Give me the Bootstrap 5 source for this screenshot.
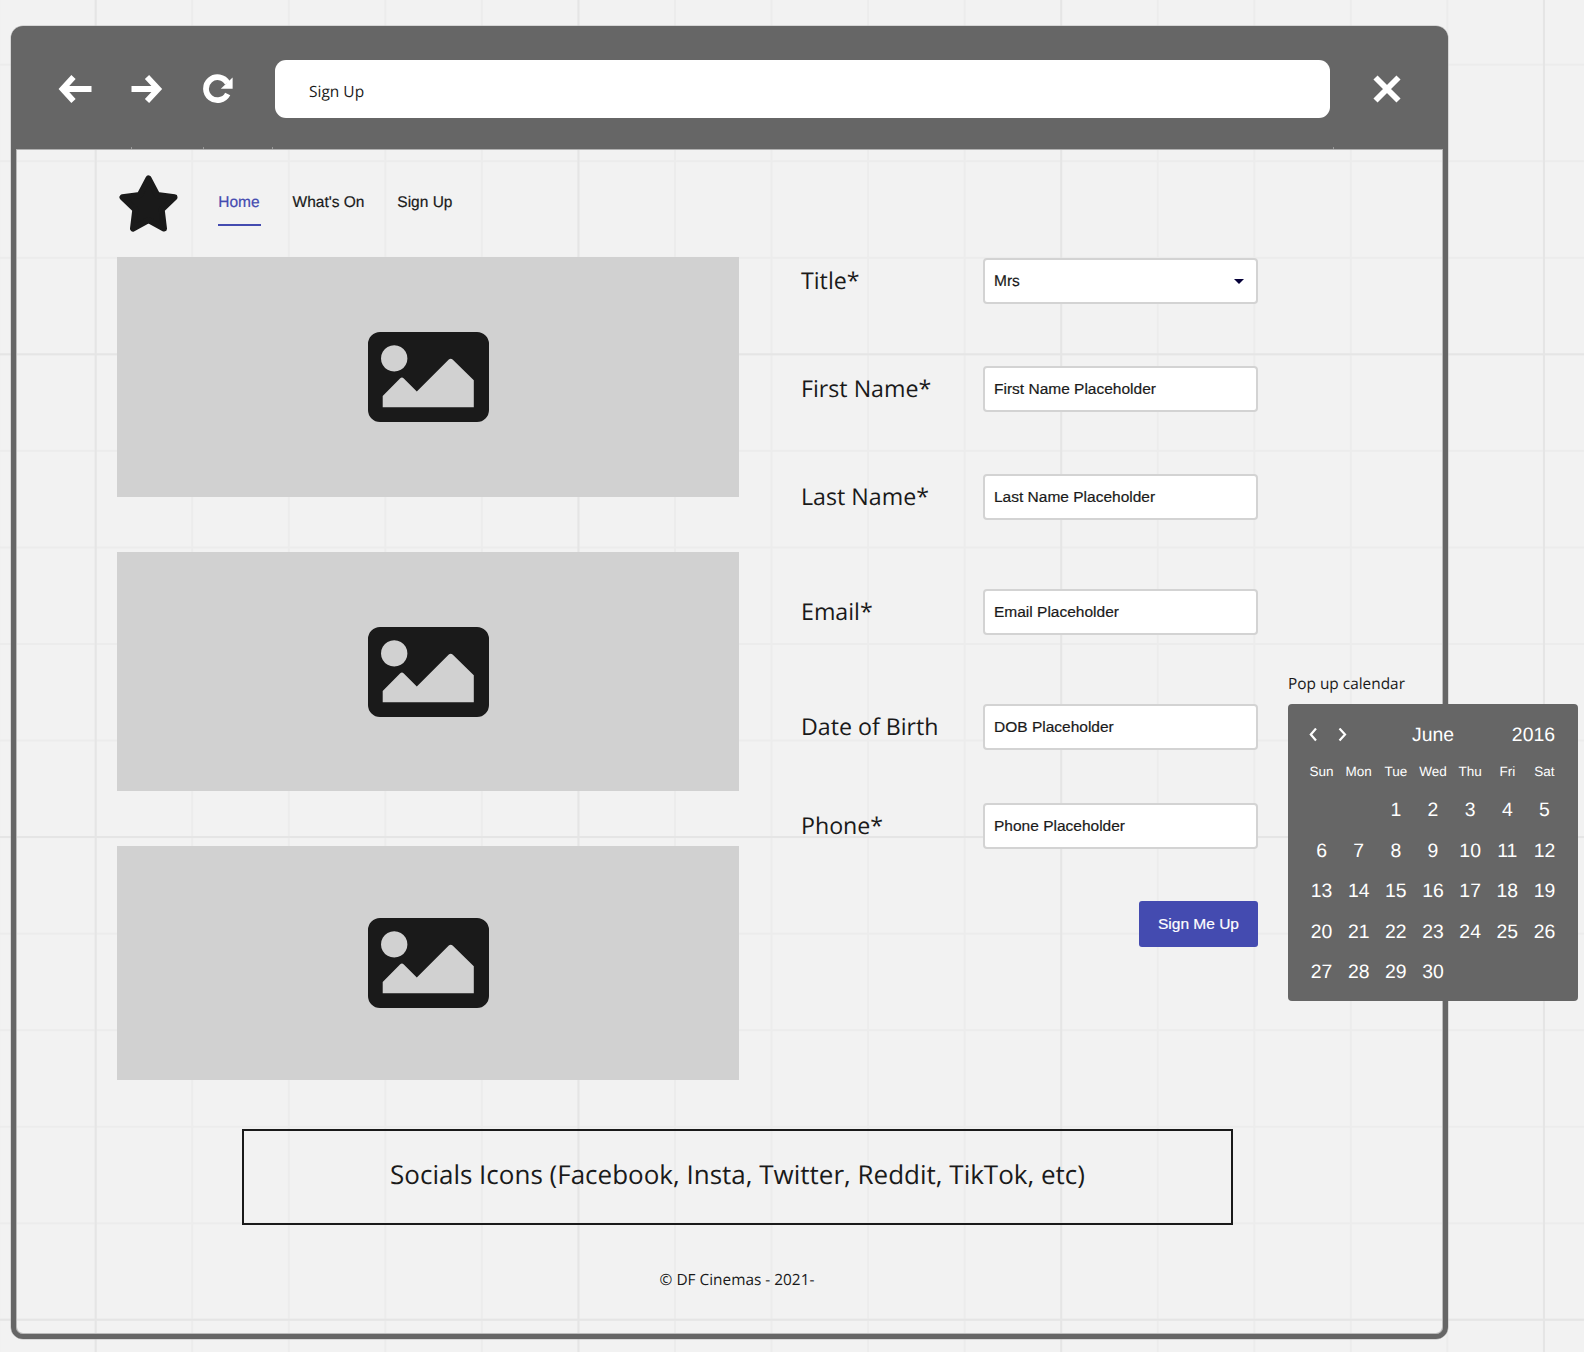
<!DOCTYPE html>
<html lang="en">
<head>
<meta charset="utf-8">
<meta name="viewport" content="width=device-width, initial-scale=1">
<title>Sign Up</title>
<link href="https://cdn.jsdelivr.net/npm/bootstrap@5.3.0/dist/css/bootstrap.min.css" rel="stylesheet">
<style>
body{background:#f2f2f2;color:#1a1a1a;font-family:"Open Sans","Noto Sans",sans-serif;margin:0;text-rendering:geometricPrecision}
.board{width:1584px;height:1352px;padding:26px 0 0 11px}
.board-grid{position:absolute;left:0;top:0;z-index:0}
.browser{width:1437px;height:1313px;border:5px solid #666;border-radius:12px;box-shadow:0 0 0 .5px #bbb,inset 0 0 0 1px #bbb;z-index:1}
.bar{height:118px;background:linear-gradient(#999,#999) 115px 100%/1px 2px no-repeat,linear-gradient(#999,#999) 187px 100%/1px 2px no-repeat,linear-gradient(#999,#999) 256px 100%/1px 2px no-repeat,linear-gradient(#999,#999) 1317px 100%/1px 2px no-repeat,#666;padding:0 42px 2px 42px;box-shadow:0 1px 0 #b0b0b0}
.bar svg{display:block;flex:none}
.url{width:1055px;height:58px;border-radius:11px;padding:5px 0 0 34px;font-size:15.5px;margin:0 auto 0 0}
.arial{font-family:"Liberation Sans",Arial,sans-serif}
.site-nav{height:108px;padding-left:103px;font-size:15.5px;-webkit-text-stroke:.2px}
.site-nav .nav-link{color:#1a1a1a;padding:0 1.6px 0 .3px;height:46px;line-height:46px;border-bottom:2px solid transparent}
.site-nav .nav-link.active{color:#444bb0;border-color:#444bb0}
.main{padding-left:101px;height:846px}
.pics{width:622px}
.pic{background:#d1d1d1}
.signup{width:457px;margin-left:62px;padding-top:1px}
.field-label{width:182px;font-size:23.2px;line-height:45px;height:46px;white-space:nowrap}
.signup .form-control{width:275px;height:46px;border:2px solid #d3d3d3;border-radius:4px;padding:0 9px;font-size:15.5px;color:#1a1a1a;background:#fff;line-height:42px;-webkit-text-stroke:.2px}
.signup .picker{padding-top:1px}
.caret{width:0;height:0;border:5px solid transparent;border-top-color:#050038;border-bottom:0;margin-right:3px}
.send{width:119px;height:46px;background:#444bb0;color:#fff;border:0;border-radius:3px;font-size:15.5px;padding:0;-webkit-text-stroke:.2px}
.gap-a{margin-bottom:62px}.gap-b{margin-bottom:69px}.gap-c{margin-bottom:53px}
.socials{width:991px;height:96px;border:2px solid #1a1a1a;margin:26px 0 0 226px;font-size:26px;padding-bottom:5px}
.copy{font-size:15.4px;margin-top:43px;width:990px;margin-left:226px}
.popup{left:1288px;top:672px;z-index:2}
.popup-title{font-size:15.4px;height:32px;line-height:23px}
.cal{width:290px;height:297px;background:#666;border-radius:4px;padding:11px 15px;color:#fff}
.cal-head{height:40px;font-size:19.4px;padding:0 8px 0 6px}
.cal-head span{padding-top:1px}
.cal-grid{display:grid;grid-template-columns:repeat(7,37.15px);text-align:center;font-size:19.4px;line-height:40.5px}
.cal-days{font-size:13.5px;line-height:34px;margin-bottom:1px}
</style>
</head>
<body>
<div class="board position-relative overflow-hidden">
<svg class="board-grid" width="1584" height="1352" fill="none">
<defs>
<pattern id="minor" x="94.7" y="63.7" width="96.55" height="96.55" patternUnits="userSpaceOnUse"><path d="M1 0V97M0 1H97" stroke="#ececec" stroke-width="2"/></pattern>
<pattern id="major" x="94.7" y="353.3" width="482.75" height="482.7" patternUnits="userSpaceOnUse"><path d="M1 0V483M0 1H483" stroke="#e5e5e5" stroke-width="2"/></pattern>
</defs>
<rect width="1584" height="1352" fill="url(#minor)"/><rect width="1584" height="1352" fill="url(#major)"/>
</svg>

<div class="browser position-relative d-flex flex-column">
<header class="bar d-flex align-items-center">
<svg width="34" height="28" viewBox="0 0 34 28" fill="none" stroke="#fff" stroke-width="5.8"><path d="M15.5 2 4.5 14l11 12M5 14h28.5"/></svg>
<svg style="margin-left:39px" width="32" height="28" viewBox="0 0 32 28" fill="none" stroke="#fff" stroke-width="5.8"><path d="M16 2l11.2 12L16 26M.5 14h27"/></svg>
<svg style="margin-left:40px" width="32" height="30" viewBox="0 0 32 30"><path d="M24.7 20A11.5 11.5 0 1 1 24.5 9" fill="none" stroke="#fff" stroke-width="5.800"/><path d="M29.6 3.500v11.300H17.800z" fill="#fff"/></svg>
<div class="url bg-white d-flex align-items-center" style="margin-left:40px">Sign Up</div>
<svg width="28" height="28" viewBox="0 0 28 28" fill="none" stroke="#fff" stroke-width="5.8"><path d="M2.5 2.500l23 23M25.500 2.500l-23 23"/></svg>
</header>

<nav class="site-nav arial d-flex align-items-center">
<svg width="59" height="57" viewBox="0 0 59 57"><path d="M29.5 3.5 38.2 20 55.5 22.3 42.7 34.5 45 53.5 29.5 45 14 53.5 16.3 34.5 3.5 22.3 20.8 20z" fill="#1a1a1a" stroke="#1a1a1a" stroke-width="6" stroke-linejoin="round"/></svg>
<div class="nav" style="margin-left:40px;gap:31px">
<a class="nav-link active" href="#">Home</a>
<a class="nav-link" href="#">What's On</a>
<a class="nav-link" href="#">Sign Up</a>
</div>
</nav>

<main class="main d-flex align-items-start">
<svg width="0" height="0" class="position-absolute"><symbol id="image" viewBox="0 0 121 90"><path fill="#1a1a1a" fill-rule="evenodd" d="M12 0H109a12 12 0 0 1 12 12V78a12 12 0 0 1-12 12H12A12 12 0 0 1 0 78V12A12 12 0 0 1 12 0ZM26.2 13.2a13.2 13.2 0 1 0 .01 0ZM14.7 64V75.2H105.8V48.3L84.6 27.6Q82.7 26 80.8 27.6L48.8 59.5 35.8 46.4Q34 44.8 32 46.4Z"/></symbol></svg>
<div class="pics d-flex flex-column">
<div class="pic d-flex align-items-center justify-content-center" style="height:240px"><svg width="121" height="90"><use href="#image"/></svg></div>
<div class="pic d-flex align-items-center justify-content-center" style="height:239px;margin-top:55px"><svg width="121" height="90"><use href="#image"/></svg></div>
<div class="pic d-flex align-items-center justify-content-center" style="height:234px;margin-top:55px"><svg width="121" height="90"><use href="#image"/></svg></div>
</div>
<form class="signup">
<div class="d-flex gap-a"><label class="field-label">Title*</label><div class="form-control picker arial d-flex align-items-center justify-content-between">Mrs<span class="caret"></span></div></div>
<div class="d-flex gap-a"><label class="field-label">First Name*</label><input class="form-control arial" value="First Name Placeholder"></div>
<div class="d-flex gap-b"><label class="field-label">Last Name*</label><input class="form-control arial" value="Last Name Placeholder"></div>
<div class="d-flex gap-b"><label class="field-label">Email*</label><input class="form-control arial" value="Email Placeholder"></div>
<div class="d-flex gap-c"><label class="field-label">Date of Birth</label><input class="form-control arial" value="DOB Placeholder"></div>
<div class="d-flex" style="margin-bottom:52px"><label class="field-label">Phone*</label><input class="form-control arial" value="Phone Placeholder"></div>
<div class="d-flex justify-content-end"><button class="btn send arial" type="button">Sign Me Up</button></div>
</form>
</main>

<footer>
<div class="socials d-flex align-items-center justify-content-center">Socials Icons (Facebook, Insta, Twitter, Reddit, TikTok, etc)</div>
<div class="copy text-center">© DF Cinemas - 2021-</div>
</footer>
</div>

<aside class="popup position-absolute">
<div class="popup-title">Pop up calendar</div>
<div class="cal arial">
<div class="cal-head d-flex align-items-center">
<svg width="38" height="14" viewBox="0 0 38 14" fill="none" stroke="#fff" stroke-width="2.2"><path d="M7 .5 1.8 6.5 7 12.5M30.5 .5 36 6.5l-5.5 6"/></svg>
<span style="margin-left:65px">June</span><span class="ms-auto">2016</span>
</div>
<div class="cal-grid cal-days"><span>Sun</span><span>Mon</span><span>Tue</span><span>Wed</span><span>Thu</span><span>Fri</span><span>Sat</span></div>
<div class="cal-grid">
<span></span><span></span><span>1</span><span>2</span><span>3</span><span>4</span><span>5</span>
<span>6</span><span>7</span><span>8</span><span>9</span><span>10</span><span>11</span><span>12</span>
<span>13</span><span>14</span><span>15</span><span>16</span><span>17</span><span>18</span><span>19</span>
<span>20</span><span>21</span><span>22</span><span>23</span><span>24</span><span>25</span><span>26</span>
<span>27</span><span>28</span><span>29</span><span>30</span>
</div>
</div>
</aside>
</div>
<script src="https://cdn.jsdelivr.net/npm/bootstrap@5.3.0/dist/js/bootstrap.bundle.min.js"></script>
</body>
</html>
